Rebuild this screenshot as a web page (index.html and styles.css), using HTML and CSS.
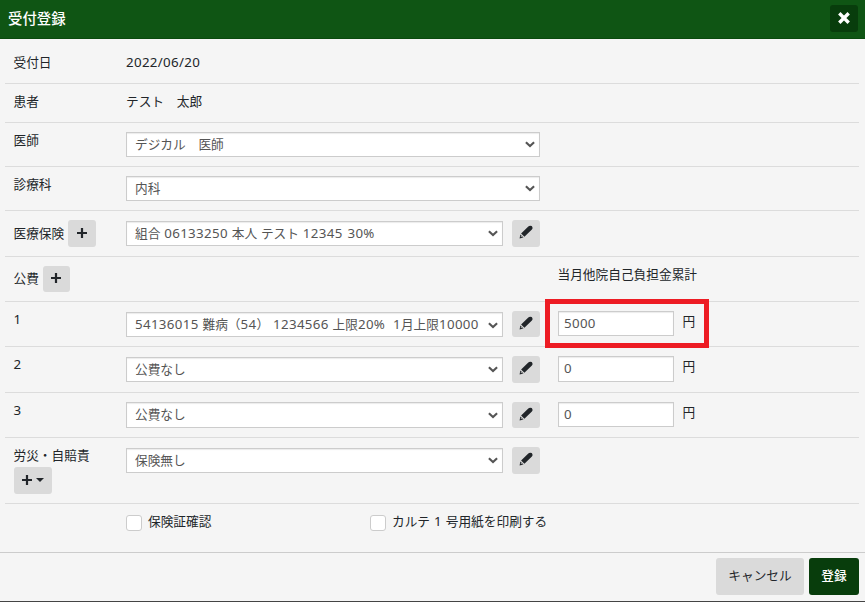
FILE: index.html
```
<!DOCTYPE html>
<html lang="ja">
<head>
<meta charset="UTF-8">
<meta name="viewport" content="width=device-width, initial-scale=1.0">
<title>受付登録</title>
<link rel="stylesheet" href="styles.css">
</head>
<body>

<!-- shared icons -->
<svg class="defs" width="0" height="0">
  <symbol id="plus" viewBox="0 0 12 12"><path d="M6 1V11M1 6H11" stroke="currentColor" stroke-width="2.2"/></symbol>
  <symbol id="pencil" viewBox="0 0 14 14"><path d="M.6 13.4L1.3 9.5L4.5 12.6Z M2.1 8.6L9.3 1.5Q10.8 .1 12.7 1.1Q14.3 2.9 12.9 4.5L5.4 11.8Z" fill="currentColor"/><path d="M1.7 10.9L3.1 12.3" stroke="#dadada" stroke-width=".8"/></symbol>
  <symbol id="arrow" viewBox="0 0 10 7"><path d="M.9 1.3L5 5.1L9.1 1.3" fill="none" stroke="currentColor" stroke-width="2.1"/></symbol>
</svg>

<div class="modal">
  <div class="modal-header">
    <span class="title">受付登録</span>
    <button class="close" aria-label="閉じる"><svg width="12" height="12" viewBox="0 0 12 12"><path d="M1.3 1.3L10.7 10.7M10.7 1.3L1.3 10.7" stroke="#fff" stroke-width="3.4"/></svg></button>
  </div>

  <div class="modal-body">
    <div class="row row-date">
      <div class="label">受付日</div>
      <div class="text"><span class="num">2022/06/20</span></div>
    </div>
    <div class="row row-patient">
      <div class="label">患者</div>
      <div class="text">テスト　太郎</div>
    </div>
    <div class="row row-doctor">
      <div class="label">医師</div>
      <div class="select wide">デジカル　医師<svg class="arrow"><use href="#arrow"/></svg></div>
    </div>
    <div class="row row-doctor">
      <div class="label">診療科</div>
      <div class="select wide">内科<svg class="arrow"><use href="#arrow"/></svg></div>
    </div>
    <div class="row row-insurance">
      <div class="label with-btn"><span>医療保険</span><button class="btn add" aria-label="追加"><svg class="plus"><use href="#plus"/></svg></button></div>
      <div class="select">組合 <span class="num">06133250</span> 本人 テスト <span class="num">12345 30%</span><svg class="arrow"><use href="#arrow"/></svg></div>
      <button class="btn edit" aria-label="編集"><svg class="pencil"><use href="#pencil"/></svg></button>
    </div>
    <div class="row row-public">
      <div class="label with-btn"><span>公費</span><button class="btn add" aria-label="追加"><svg class="plus"><use href="#plus"/></svg></button></div>
      <div class="amount-title">当月他院自己負担金累計</div>
    </div>
    <div class="row row-one">
      <div class="label"><span class="num">1</span></div>
      <div class="select"><span class="num">54136015</span> 難病（<span class="num">54</span>）&nbsp;<span class="num">1234566</span> 上限<span class="num">20%</span>&nbsp; <span class="num">1</span>月上限<span class="num">10000</span><svg class="arrow"><use href="#arrow"/></svg></div>
      <button class="btn edit" aria-label="編集"><svg class="pencil"><use href="#pencil"/></svg></button>
      <input class="amount" type="text" value="5000">
      <span class="yen">円</span>
      <div class="highlight"></div>
    </div>
    <div class="row row-two">
      <div class="label"><span class="num">2</span></div>
      <div class="select">公費なし<svg class="arrow"><use href="#arrow"/></svg></div>
      <button class="btn edit" aria-label="編集"><svg class="pencil"><use href="#pencil"/></svg></button>
      <input class="amount" type="text" value="0">
      <span class="yen">円</span>
    </div>
    <div class="row row-three">
      <div class="label"><span class="num">3</span></div>
      <div class="select">公費なし<svg class="arrow"><use href="#arrow"/></svg></div>
      <button class="btn edit" aria-label="編集"><svg class="pencil"><use href="#pencil"/></svg></button>
      <input class="amount" type="text" value="0">
      <span class="yen">円</span>
    </div>
    <div class="row row-accident">
      <div class="label">労災・自賠責<button class="btn add-menu" aria-label="追加"><svg class="plus"><use href="#plus"/></svg><span class="caret"></span></button></div>
      <div class="select">保険無し<svg class="arrow"><use href="#arrow"/></svg></div>
      <button class="btn edit" aria-label="編集"><svg class="pencil"><use href="#pencil"/></svg></button>
    </div>
    <div class="checks">
      <label class="check"><input type="checkbox">保険証確認</label>
      <label class="check"><input type="checkbox"><span>カルテ <span class="num">1</span> 号用紙を印刷する</span></label>
    </div>
  </div>

  <div class="modal-footer">
    <button class="btn cancel">キャンセル</button>
    <button class="btn submit">登録</button>
  </div>
</div>

</body>
</html>
```

FILE: styles.css
```
* {
  box-sizing: border-box;
}
body {
  margin: 0;
  background: #fff;
  color: #212529;
  font-family: "Noto Sans CJK JP", "Noto Sans", sans-serif;
  font-size: 12.7px;
  line-height: 20px;
  word-spacing: 1px;
  overflow: hidden;
}
button, input {
  font: inherit;
  color: inherit;
  margin: 0;
}
.defs {
  position: absolute;
}
.num, .amount {
  font-family: "Noto Sans", sans-serif;
  font-size: 13.3px;
  font-weight: 400;
  line-height: 18px;
  letter-spacing: 0.35px;
}
.modal {
  width: 865px;
  height: 602px;
  background: #f5f5f5;
  border-bottom: 1px solid #444;
}
.modal-header {
  display: flex;
  justify-content: space-between;
  height: 39px;
  padding: 5px 7px 0 8px;
  background: #0f5514;
  border-bottom: 1px solid #0a4a0e;
  color: #fff;
}
.title {
  font-size: 14.4px;
  font-weight: 500;
  line-height: 25px;
}
.close {
  display: flex;
  align-items: center;
  justify-content: center;
  width: 28px;
  height: 27px;
  padding: 0 0 2px;
  border: none;
  border-radius: 3px;
  background: #083d0c;
}
.modal-body {
  height: 513px;
  padding: 5px 6px 0 5px;
}
.row {
  display: flex;
  align-items: flex-start;
  position: relative;
  height: 45px;
  padding: 9px 0 0 8.5px;
  border-bottom: 1px solid #dcdcdc;
}
.row-date {
  height: 40px;
  padding-top: 8px;
}
.row-patient {
  height: 39px;
  padding-top: 7px;
}
.row-doctor {
  height: 44px;
}
.row-insurance, .row-two {
  height: 46px;
}
.row-accident {
  height: 66px;
}
.label {
  flex: none;
  width: 112.5px;
  margin-top: -2px;
}
.row-date .label, .row-patient .label {
  margin-top: 0;
}
.row-one .label, .row-two .label, .row-three .label {
  margin-top: -2px;
}
.row-accident .label {
  margin-top: -2px;
}
.label.with-btn {
  display: flex;
  align-items: center;
  gap: 3.7px;
  margin-top: 0;
}
.with-btn span {
  padding-bottom: 2px;
}
.select {
  display: block;
  position: relative;
  width: 377px;
  height: 25px;
  margin-top: 1px;
  padding-left: 8px;
  border: 1px solid #ccc;
  background: #fff;
  box-shadow: inset 0 1px 1px rgba(0, 0, 0, 0.08);
  color: #555;
  line-height: 21px;
  white-space: nowrap;
}
.row-doctor .select {
  margin-top: 0;
}
.row-three .select {
  height: 26px;
  margin-top: 0;
}
.select.wide {
  width: 414px;
}
.arrow {
  position: absolute;
  top: 8px;
  right: 4px;
  width: 10px;
  height: 7px;
}
.row-one .arrow, .row-three .arrow {
  top: 9px;
}
.btn {
  display: flex;
  align-items: center;
  justify-content: center;
  padding: 0;
  border: none;
  border-radius: 3px;
  background: #dadada;
}
.add, .edit {
  width: 28px;
  height: 27px;
}
.add {
  padding-bottom: 2px;
}
.row-public .add {
  width: 27px;
  height: 26px;
}
.row-one .edit, .row-three .edit {
  height: 26px;
}
.edit {
  margin-left: 9px;
  padding-bottom: 3px;
}
.plus {
  width: 12px;
  height: 12px;
}
.pencil {
  width: 14px;
  height: 14px;
}
.add-menu {
  gap: 3px;
  width: 38px;
  height: 27px;
  margin: 2px 0 0;
  padding-bottom: 1px;
}
.caret {
  border: 4px solid transparent;
  border-top-color: #212529;
  border-bottom: 0;
}
.amount-title {
  margin: -2px 0 0 431.5px;
}
.amount {
  width: 116px;
  height: 26px;
  margin-left: 18px;
  padding: 0 5px 2px;
  border: 1px solid #ccc;
  border-radius: 0;
  background: #fff;
  box-shadow: inset 0 1px 1px rgba(0, 0, 0, 0.08);
  color: #555;
}
.row-one .amount, .row-three .amount {
  height: 25px;
}
.yen {
  margin: 0 0 0 8.5px;
}
.highlight {
  position: absolute;
  top: -3px;
  left: 540px;
  width: 164px;
  height: 49px;
  border: 5px solid #ed1c24;
  pointer-events: none;
  z-index: 1;
}
.checks {
  display: grid;
  grid-template-columns: 244px 1fr;
  padding: 7px 0 0 121px;
}
.check {
  display: flex;
  gap: 6px;
}
.check input {
  appearance: none;
  width: 16px;
  height: 16px;
  margin-top: 4px;
  border: 1px solid #ccc;
  border-radius: 3px;
  background: #fff;
}
.modal-footer {
  display: flex;
  justify-content: flex-end;
  gap: 5px;
  height: 49px;
  padding: 5px 6px 0 0;
  border-top: 1px solid #ccc;
}
.modal-footer .btn {
  height: 37px;
  padding-bottom: 4px;
}
.modal-footer .cancel {
  width: 88px;
}
.modal-footer .submit {
  width: 50px;
  background: #083d0c;
  color: #fff;
  font-weight: 500;
}
```
